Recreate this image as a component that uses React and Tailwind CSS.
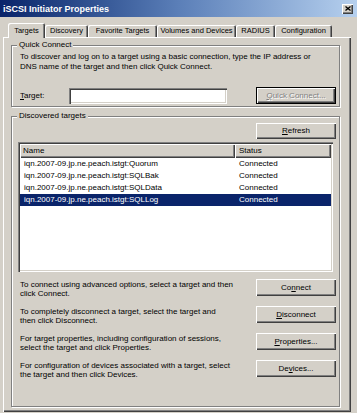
import React from "react";

const raised = "bg-[#d4d0c8] shadow-[inset_1px_1px_0_#ffffff,inset_-1px_-1px_0_#404040,inset_-2px_-2px_0_#808080]";
const groupBox = "border border-[#808080] shadow-[inset_1px_1px_0_#ffffff,1px_1px_0_#ffffff]";
const tabEdge = "rounded-t-[2px] bg-[#d4d0c8] shadow-[inset_1px_1px_0_#ffffff,inset_-1px_0_0_#404040,inset_-2px_0_0_#808080]";

const targets = [
    "iqn.2007-09.jp.ne.peach.istgt:Quorum",
    "iqn.2007-09.jp.ne.peach.istgt:SQLBak",
    "iqn.2007-09.jp.ne.peach.istgt:SQLData",
    "iqn.2007-09.jp.ne.peach.istgt:SQLLog",
];

const actions = [
    {
        lines: ["To connect using advanced options, select a target and then", "click Connect."],
        label: <>Co<u>n</u>nect</>,
    },
    {
        lines: ["To completely disconnect a target, select the target and", "then click Disconnect."],
        label: <><u>D</u>isconnect</>,
    },
    {
        lines: ["For target properties, including configuration of sessions,", "select the target and click Properties."],
        label: <><u>P</u>roperties...</>,
    },
    {
        lines: ["For configuration of devices associated with a target, select", "the target and then click Devices."],
        label: <>De<u>v</u>ices...</>,
    },
];

const tabs = [
    { name: "Discovery", w: "w-[43px]" },
    { name: "Favorite Targets", w: "w-[69px]" },
    { name: "Volumes and Devices", w: "w-[79px]" },
    { name: "RADIUS", w: "w-[39px]" },
    { name: "Configuration", w: "w-[57px]" },
];

const Button = ({ children, className = "" }) => (
    <div className={`flex items-center justify-center w-[80px] ${raised} ${className}`}>
        {children}
    </div>
);

export default function App() {
    return (
        <div
            className="w-[357px] h-[413px] overflow-hidden bg-[#d4d0c8] text-black text-[8px] leading-[10px]"
            style={{ fontFamily: '"Liberation Sans", Arial, sans-serif' }}
        >
            {/* Title bar */}
            <div className="h-[17px] flex items-center justify-between pl-[3px] pr-[4px] bg-gradient-to-r from-[#0a246a] via-[#5b7fb8] to-[#b6d0ee]">
                <span className="text-white font-bold text-[9px]">iSCSI Initiator Properties</span>
                <div className={`w-[11px] h-[10px] flex items-center justify-center ${raised}`}>
                    <svg width="6" height="5" viewBox="0 0 6 5">
                        <path d="M0.5 0.5 L5.5 4.5 M5.5 0.5 L0.5 4.5" stroke="#000" strokeWidth="1.3" />
                    </svg>
                </div>
            </div>

            <div className="px-[3px]">
                {/* Tabs */}
                <div className="mt-[6px] h-[14px] pl-[5px] flex items-end text-[7.5px]">
                    <div className={`relative z-10 -mb-px h-[15px] w-[37px] flex items-center justify-center ${tabEdge}`}>
                        Targets
                    </div>
                    {tabs.map((t) => (
                        <div
                            key={t.name}
                            className={`h-[12px] ${t.w} flex items-center justify-center whitespace-nowrap ${tabEdge}`}
                        >
                            {t.name}
                        </div>
                    ))}
                </div>

                {/* Panel */}
                <div className={`w-[348px] h-[375px] pl-[8px] pt-[3px] ${raised}`}>
                    {/* Quick Connect */}
                    <fieldset className={`w-[329px] pl-[8px] pr-[3px] pb-[2px] ${groupBox}`}>
                        <legend className="-ml-[3px] px-[2px] bg-[#d4d0c8]">Quick Connect</legend>
                        <p className="pt-[2px]">
                            To discover and log on to a target using a basic connection, type the IP address or
                            <br />
                            DNS name of the target and then click Quick Connect.
                        </p>
                        <div className="mt-[15px] h-[17px] flex items-center">
                            <span className="w-[49px]">
                                <u>T</u>arget:
                            </span>
                            <div className="w-[158px] h-[16px] bg-white shadow-[inset_1px_1px_0_#808080,inset_2px_2px_0_#404040,inset_-1px_-1px_0_#ffffff,inset_-2px_-2px_0_#d4d0c8]" />
                            <div className="ml-auto w-[80px] h-[17px] border border-black flex items-center justify-center bg-[#d4d0c8] shadow-[inset_1px_1px_0_#ffffff,inset_-1px_-1px_0_#404040,inset_-2px_-2px_0_#808080] text-[#808080] [text-shadow:1px_1px_0_#ffffff]">
                                <span>
                                    <u>Q</u>uick Connect...
                                </span>
                            </div>
                        </div>
                    </fieldset>

                    {/* Discovered targets */}
                    <fieldset className={`mt-[4px] w-[329px] h-[296px] pl-[6px] pr-[3px] ${groupBox}`}>
                        <legend className="-ml-[1px] px-[2px] bg-[#d4d0c8]">Discovered targets</legend>
                        <div className="pt-[2px] flex justify-end">
                            <Button className="h-[16px]">
                                <span>
                                    <u>R</u>efresh
                                </span>
                            </Button>
                        </div>

                        {/* List view */}
                        <div className="mt-[3px] w-[315px] h-[130px] p-[2px] bg-white shadow-[inset_1px_1px_0_#808080,inset_2px_2px_0_#404040,inset_-1px_-1px_0_#ffffff,inset_-2px_-2px_0_#d4d0c8]">
                            <div className="flex h-[14px]">
                                <div className={`w-[215px] px-[3px] flex items-center ${raised}`}>Name</div>
                                <div className={`w-[96px] px-[4px] flex items-center ${raised}`}>Status</div>
                            </div>
                            {targets.map((name, i) => {
                                const selected = i === targets.length - 1;
                                return (
                                    <div
                                        key={name}
                                        className={`flex h-[12px] items-center ${selected ? "bg-[#0a246a] text-white" : ""}`}
                                    >
                                        <div className="w-[215px] px-[4px]">{name}</div>
                                        <div className="w-[96px] px-[4px]">Connected</div>
                                    </div>
                                );
                            })}
                        </div>

                        {/* Actions */}
                        <div className="mt-[7px]">
                            {actions.map((a, i) => (
                                <div key={i} className="h-[27px] flex justify-between items-start">
                                    <p className="ml-[2px] mt-[1px] leading-[9px]">
                                        {a.lines[0]}
                                        <br />
                                        {a.lines[1]}
                                    </p>
                                    <Button className="h-[17px]">
                                        <span>{a.label}</span>
                                    </Button>
                                </div>
                            ))}
                        </div>
                    </fieldset>
                </div>
            </div>
        </div>
    );
}
